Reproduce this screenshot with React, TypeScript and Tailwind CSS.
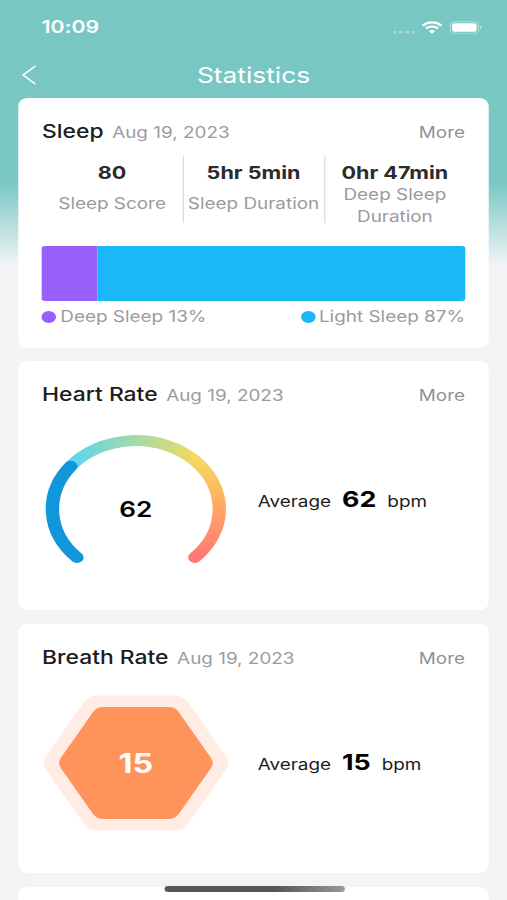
import type { ReactNode } from 'react';

const DATE = 'Aug 19, 2023';

function StatusBar() {
  return (
    <div className="flex h-[54px] items-center justify-between pl-[34px] pr-[20px]">
      <span className="text-[17.4px] font-semibold leading-6 tracking-[0.1px]">10:09</span>
      <div className="flex items-center">
        <svg className="mt-[9px]" width="19" height="4" viewBox="0 0 19 4" fill="#fff" fillOpacity="0.35">
          <circle cx="2" cy="2" r="1.5" />
          <circle cx="7" cy="2" r="1.5" />
          <circle cx="12" cy="2" r="1.5" />
          <circle cx="17" cy="2" r="1.5" />
        </svg>
        <svg className="ml-[5px]" width="17" height="13" viewBox="0 0 17 13" fill="none" stroke="#fff" strokeWidth="2.2">
          <path d="M0.9 4.6a10.8 10.8 0 0 1 15.2 0" />
          <path d="M3.7 7.5a6.8 6.8 0 0 1 9.6 0" />
          <path d="M8.5 12.8 5.9 10.2a3.7 3.7 0 0 1 5.2 0z" fill="#fff" stroke="none" />
        </svg>
        <svg className="ml-[6px]" width="27" height="13" viewBox="0 0 27 13" fill="#fff">
          <rect x="0.5" y="0.8" width="23" height="11.4" rx="3" fill="none" stroke="#fff" strokeOpacity="0.4" />
          <rect x="2" y="2.2" width="20" height="8.6" rx="1.8" />
          <path d="M24.8 4.6v3.8a2 2 0 0 0 0-3.8z" fillOpacity="0.5" />
        </svg>
      </div>
    </div>
  );
}

function Card({ title, className, children }: { title: string; className: string; children: ReactNode }) {
  return (
    <section className={`shrink-0 rounded-lg bg-white px-[19.7px] pt-[21.5px] ${className}`}>
      <header className="flex items-baseline leading-6">
        <h2 className="text-[18.8px] font-medium text-[#1c1c1e]">{title}</h2>
        <span className="ml-[7px] text-[15.5px] text-[#999b9f]">{DATE}</span>
        <button className="ml-auto text-[15.5px] text-[#8f9195]">More</button>
      </header>
      {children}
    </section>
  );
}

function SleepStat({ value, label }: { value: string; label: string }) {
  return (
    <div className="flex flex-1 flex-col items-center text-center">
      <span className="mt-[6px] shrink-0 whitespace-nowrap text-[17.7px] font-bold leading-[22px] text-[#2b2b2e]">{value}</span>
      <div className="flex h-[44px] items-center text-[15.5px] leading-[22px] text-[#999b9f]">{label}</div>
    </div>
  );
}

function Legend({ color, text }: { color: string; text: string }) {
  return (
    <div className="flex items-center gap-[3px]">
      <span className={`size-3 rounded-full ${color}`} />
      {text}
    </div>
  );
}

function Average({ value }: { value: number }) {
  return (
    <div className="flex items-baseline leading-7 text-[#1c1c1e]">
      <span className="text-[15.5px]">Average</span>
      <span className="ml-[9px] text-[22px] font-bold text-black">{value}</span>
      <span className="ml-[9px] text-[15.5px]">bpm</span>
    </div>
  );
}

function HeartGauge() {
  return (
    <svg className="block" width="155" height="140" viewBox="-77.5 -77 155 140" fill="none" strokeWidth="11" strokeLinecap="round">
      <defs>
        <linearGradient id="cool" gradientUnits="userSpaceOnUse" x1="-54" y1="0" x2="49" y2="0">
          <stop offset="0" stopColor="#5bd5f0" />
          <stop offset="0.5" stopColor="#a0d9ac" />
          <stop offset="1" stopColor="#f4d960" />
        </linearGradient>
        <linearGradient id="warm" gradientUnits="userSpaceOnUse" x1="0" y1="-49" x2="0" y2="49">
          <stop offset="0" stopColor="#f4d960" />
          <stop offset="0.4" stopColor="#ffb062" />
          <stop offset="1" stopColor="#ff7777" />
        </linearGradient>
      </defs>
      <path d="M48.4-48.4A68.5 68.5 0 0 1 48.4 48.4" stroke="url(#warm)" />
      <path d="M-53.5-42.8A68.5 68.5 0 0 1 48.4-48.4" stroke="url(#cool)" strokeLinecap="butt" />
      <path d="M-48.4 48.4A68.5 68.5 0 0 1-53.5-42.8" stroke="#1296db" />
      <text y="7.6" textAnchor="middle" fontSize="21.5" fontWeight="600" fill="#000" stroke="none">62</text>
    </svg>
  );
}

function BreathHexagon() {
  return (
    <svg className="block" width="155" height="140" viewBox="-77.5 -70 155 140" strokeLinejoin="round">
      <path d="M-63.8 0-32-55.5H32L63.8 0 32 55.5H-32z" fill="#ffede5" stroke="#ffede5" strokeWidth="24" />
      <path d="M-53 0-26.5-46H26.5L53 0 26.5 46H-26.5z" fill="#ff935c" stroke="#ff935c" strokeWidth="20" />
      <text y="9.6" textAnchor="middle" fontSize="26.5" fontWeight="700" fill="#fff">15</text>
    </svg>
  );
}

export default function App() {
  return (
    <div className="h-[900px] w-[507px] overflow-hidden">
      {/* 416px wide layout stretched to the full width of the screen */}
      <div className="relative flex h-[900px] w-[416px] origin-top-left scale-x-[1.21875] flex-col overflow-hidden bg-[#f2f4f6] bg-[linear-gradient(to_bottom,#78c7c3_0px,#78c7c3_182px,#f2f4f6_266px)] font-['Inter',sans-serif]">
        <div className="h-[98px] shrink-0 text-white">
          <StatusBar />
          <nav className="grid h-[41px] grid-cols-[1fr_auto_1fr] items-center">
            <svg className="ml-[18px] mt-[1px]" width="12" height="20" viewBox="0 0 12 20" fill="none" stroke="#fff" strokeWidth="1.5">
              <path d="M11 1 1 10l10 9" />
            </svg>
            <h1 className="text-[21.6px] leading-7">Statistics</h1>
          </nav>
        </div>

        <main className="flex flex-col px-[14.8px]">
          <Card title="Sleep" className="h-[250px]">
            <div className="mt-[11.5px] flex h-[67px] divide-x-[1.6px] divide-[#d9dadd]">
              <SleepStat value="80" label="Sleep Score" />
              <SleepStat value="5hr 5min" label="Sleep Duration" />
              <SleepStat value="0hr 47min" label="Deep Sleep Duration" />
            </div>
            <div className="mt-[22.5px] flex h-[55px] overflow-hidden rounded-[3px]">
              <div className="w-[13%] bg-[#985ffd]" />
              <div className="flex-1 bg-[#1cb7f7]" />
            </div>
            <div className="mt-[4px] flex justify-between text-[15.5px] leading-6 text-[#999b9f]">
              <Legend color="bg-[#985ffd]" text="Deep Sleep 13%" />
              <Legend color="bg-[#1cb7f7]" text="Light Sleep 87%" />
            </div>
          </Card>

          <Card title="Heart Rate" className="mt-[13px] h-[249px]">
            <div className="mt-[24px] flex">
              <HeartGauge />
              <div className="ml-[22px] mt-[53px]">
                <Average value={62} />
              </div>
            </div>
          </Card>

          <Card title="Breath Rate" className="mt-[14px] h-[249px]">
            <div className="mt-[22px] flex">
              <BreathHexagon />
              <div className="ml-[22px] mt-[55px]">
                <Average value={15} />
              </div>
            </div>
          </Card>

          <section className="mt-[14px] h-[100px] shrink-0 rounded-lg bg-white" />
        </main>

        <div className="absolute bottom-[8.5px] left-[134.5px] h-[6px] w-[148px] rounded-full bg-linear-to-r from-[#555] from-60% to-[#999]" />
      </div>
    </div>
  );
}
